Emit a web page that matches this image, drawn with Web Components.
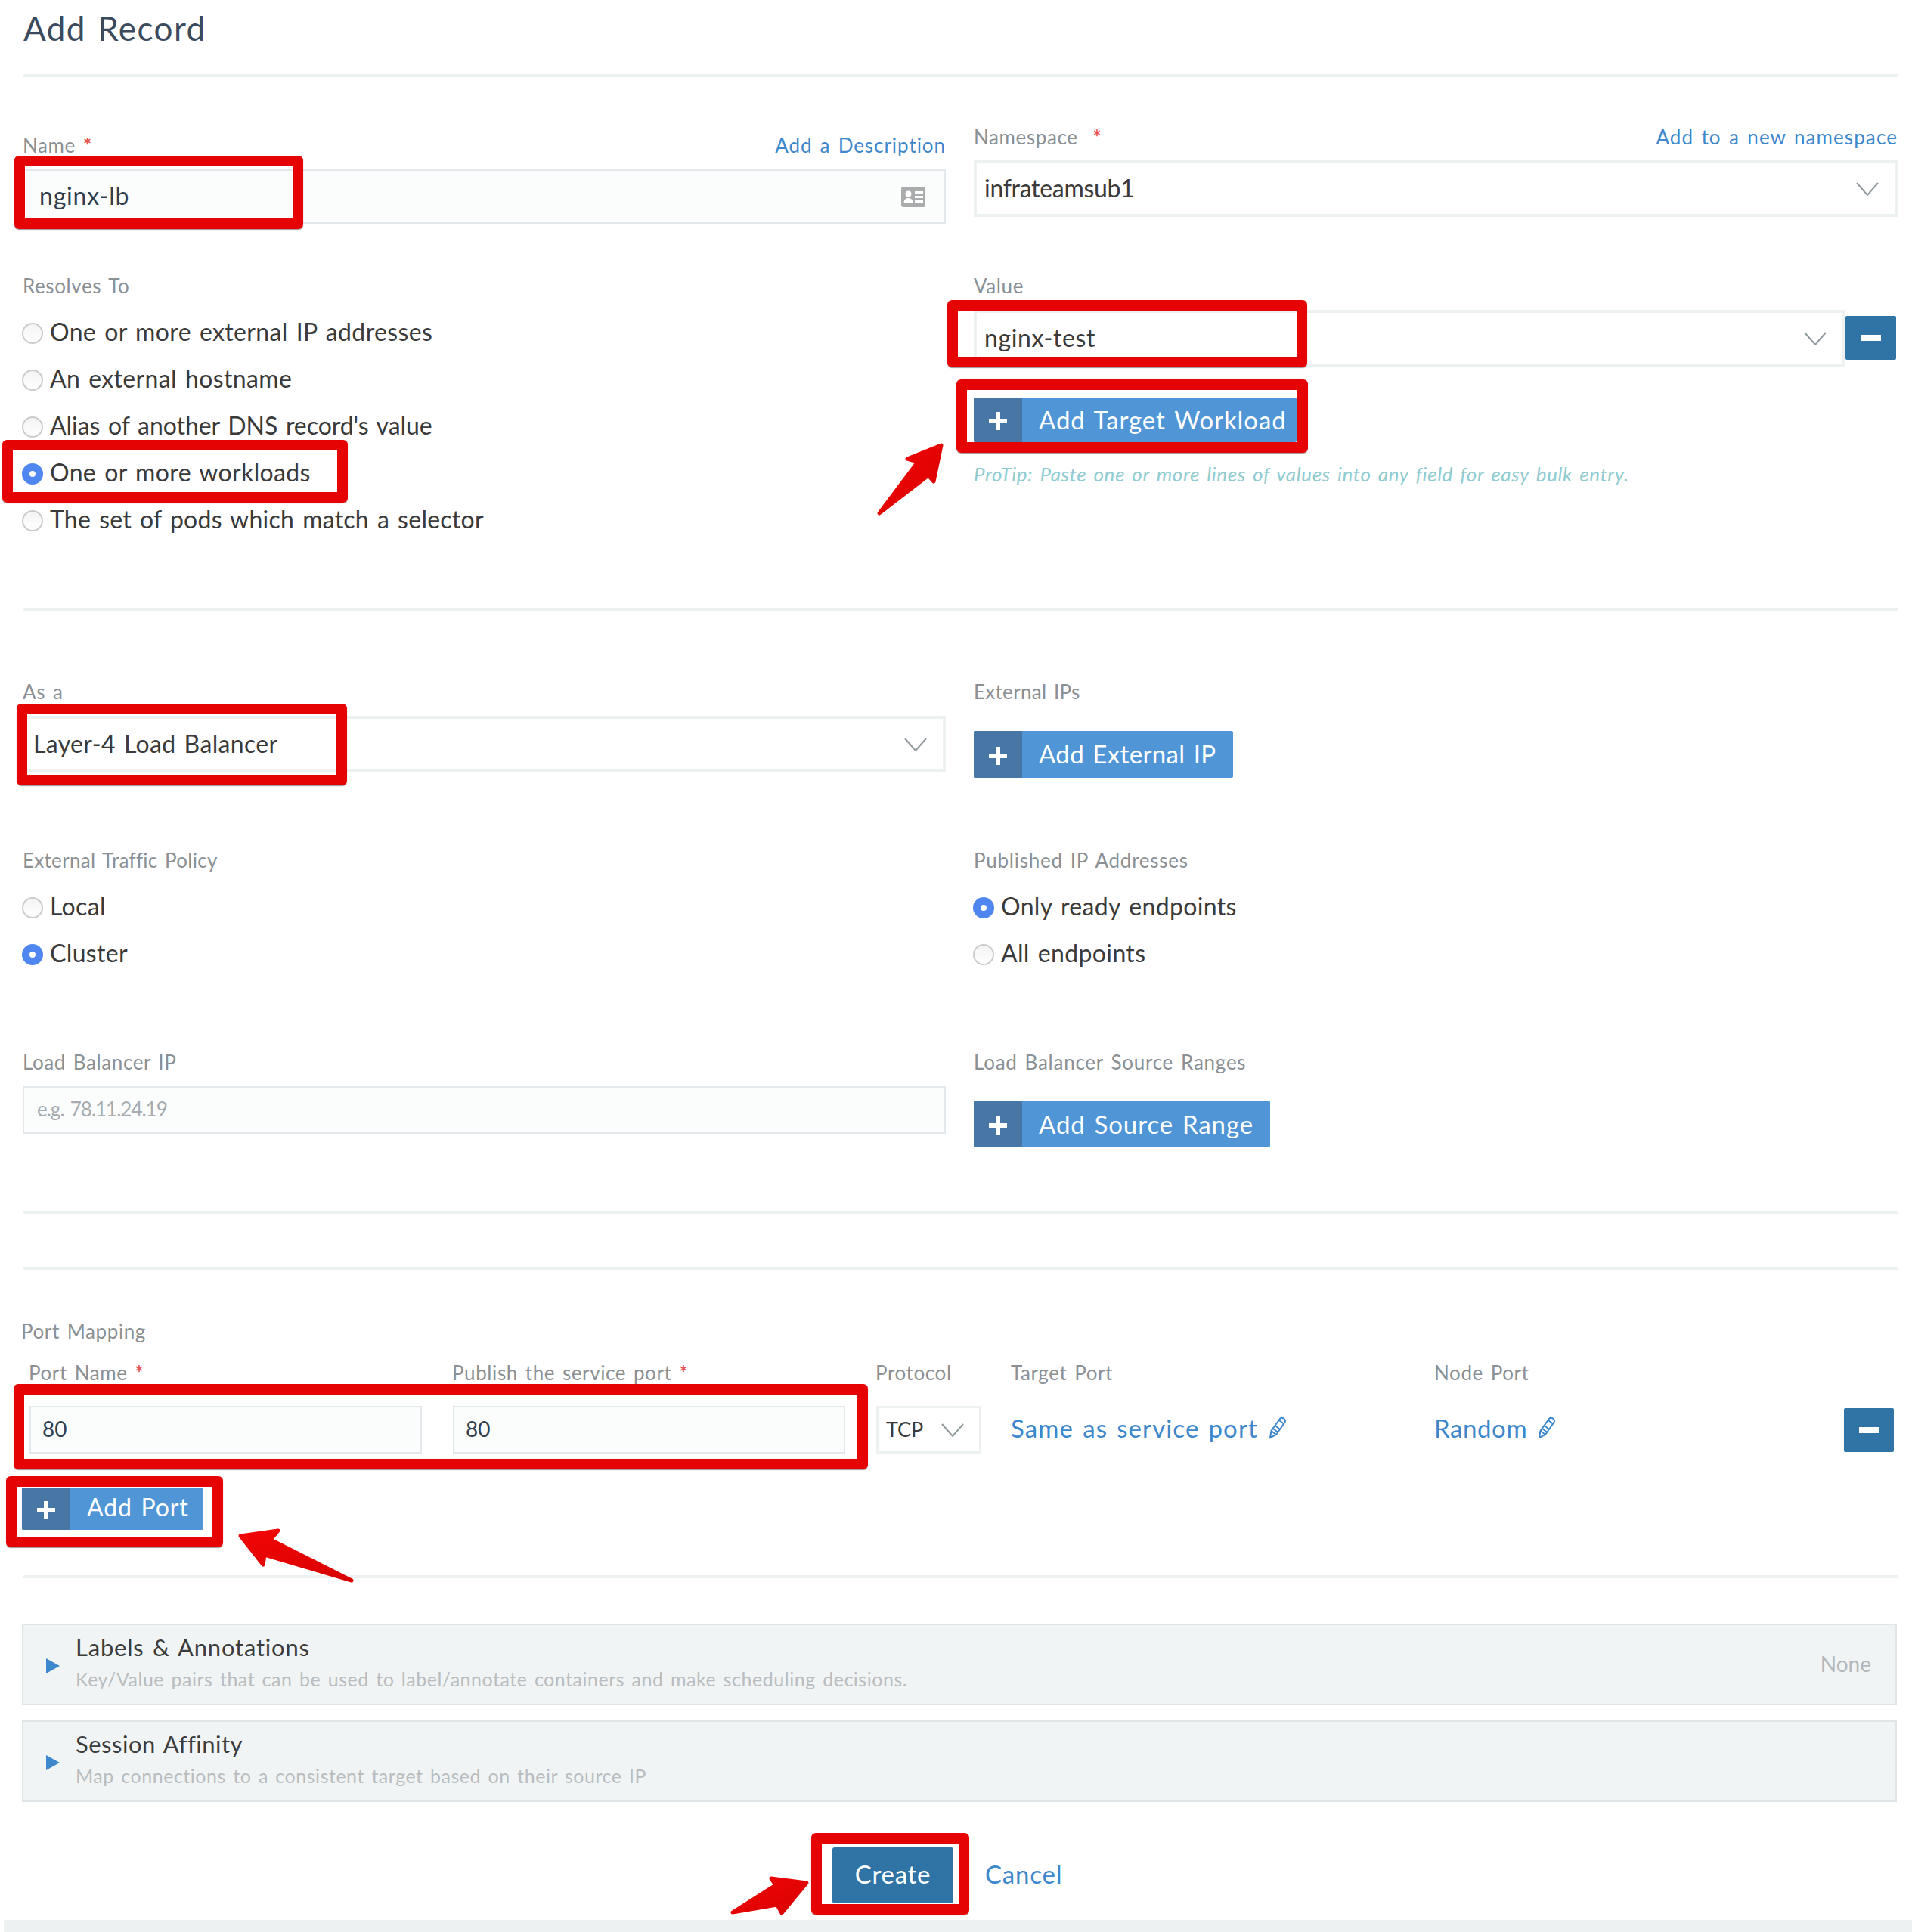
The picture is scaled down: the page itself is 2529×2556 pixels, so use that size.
<!DOCTYPE html>
<html>
<head>
<meta charset="utf-8">
<title>Add Record</title>
<style>
  html, body { margin: 0; background: #fff; }
  body { position: relative; width: 2529px; height: 2556px; overflow: hidden;
         font-family: Lato, "Open Sans", sans-serif; word-spacing: .16em; }
</style>
</head>
<body>
<record-form></record-form>

<anno-box style="left:19px;top:206px;width:382px;height:97px"></anno-box>
<anno-box style="left:3px;top:582px;width:457px;height:83px"></anno-box>
<anno-box style="left:1253px;top:397px;width:476px;height:89px"></anno-box>
<anno-box style="left:1265px;top:502px;width:465px;height:97px"></anno-box>
<anno-box style="left:22px;top:931px;width:437px;height:108px"></anno-box>
<anno-box style="left:18px;top:1831px;width:1130px;height:113px"></anno-box>
<anno-box style="left:8px;top:1953px;width:287px;height:94px"></anno-box>
<anno-box style="left:1073px;top:2425px;width:209px;height:108px"></anno-box>

<anno-arrow id="a1" points="1163,679 1214,611 1200,607 1245,589 1235,637 1228,629"></anno-arrow>
<anno-arrow id="a2" points="465,2091 358,2037 368,2025 318,2032 348,2070 350,2057"></anno-arrow>
<anno-arrow id="a3" points="969,2530 1026,2494 1020,2485 1067,2491 1034,2531 1028,2520"></anno-arrow>

<script>
function shadow(el, html) {
  el.attachShadow({ mode: 'open' }).innerHTML = html;
}

const CHEVRON = `<svg width="30" height="18" viewBox="0 0 30 18"><path d="M1 1 L15 17 L29 1" fill="none" stroke="#8f989c" stroke-width="2"/></svg>`;
const PENCIL = `<svg width="24" height="30" viewBox="0 0 24 30" fill="none" stroke="#3d87cc" stroke-width="2"><path d="M2 28 L3.5 19 L15 3 Q17 1 20 2.5 Q23 5 21.5 7.5 L10 24 Z"/><path d="M3.5 19 L10 24 M6 16 L12.5 21 M9 12 L15 17 M14 5 L20.5 10"/></svg>`;

class FieldLabel extends HTMLElement {
  constructor() {
    super();
    const star = this.hasAttribute('required') ? `<span class="star">*</span>` : '';
    shadow(this, `
      <style>
        :host { display: flex; justify-content: space-between; height: 36px; line-height: 36px;
                font-size: 26px; color: #8a9094; letter-spacing: .6px; white-space: nowrap; }
        .star { color: #e8524f; margin-left: var(--star-gap, 10px); font-weight: 700; }
        ::slotted(a) { color: #3d87cc; letter-spacing: var(--link-spacing, 1.1px); }
      </style>
      <span><slot></slot>${star}</span>
      <slot name="link"></slot>`);
  }
}

class TextInput extends HTMLElement {
  constructor() {
    super();
    shadow(this, `
      <style>
        :host { display: flex; align-items: center; box-sizing: border-box; padding: 0 25px 0 20px;
                background: #fbfdfc; border: 2px solid #e2e8eb; color: #2f3d4f; font-size: 32px; }
        :host([placeholder]) { color: #a6abaf; font-size: 26px; padding-left: 17px; letter-spacing: -1px; }
        slot[name=icon] { margin-left: auto; }
        span { flex: 1; padding-bottom: 3px; }
      </style>
      <span><slot></slot></span><slot name="icon"></slot>`);
  }
}

class SelectBox extends HTMLElement {
  constructor() {
    super();
    shadow(this, `
      <style>
        :host { display: flex; align-items: center; justify-content: space-between; box-sizing: border-box;
                padding: 0 21px 0 10px; background: #fff; border: 4px solid #eef1f2;
                color: #3a3a3a; font-size: 32px; letter-spacing: .3px; }
        span { padding-bottom: 3px; }
        svg { flex: none; }
      </style>
      <span><slot></slot></span>${CHEVRON}`);
  }
}

class RadioRow extends HTMLElement {
  constructor() {
    super();
    shadow(this, `
      <style>
        :host { display: flex; align-items: center; height: 62px; font-size: 32px; color: #3a3a3a;
                letter-spacing: .35px; white-space: nowrap; margin-left: -1px; }
        .dot { width: 28px; height: 28px; box-sizing: border-box; border-radius: 50%; margin-right: 9px; flex: none;
               border: 2px solid #c9cccd; background: linear-gradient(#f4f4f4, #fff);
               display: flex; align-items: center; justify-content: center; margin-top: 2px; }
        :host([checked]) .dot { background: #4f86ef; border-color: #4f86ef; }
        :host([checked]) .dot::after { content: ""; width: 8px; height: 8px; border-radius: 50%; background: #fff; }
        .text { padding-bottom: 3px; }
      </style>
      <span class="dot"></span><span class="text"><slot></slot></span>`);
  }
}

class AddButton extends HTMLElement {
  constructor() {
    super();
    shadow(this, `
      <style>
        :host { display: flex; align-items: stretch; background: #5096d6; color: #fff; font-size: 33px;
                letter-spacing: .9px; white-space: nowrap; border-radius: 2px; overflow: hidden; }
        .plus { width: var(--plus-width, 64px); flex: none; background: #4977a5; display: flex; align-items: center; justify-content: center; }
        svg { margin-top: 3px; }
        .text { padding: 0 0 var(--text-lift, 1px) 22px; display: flex; align-items: center; }
      </style>
      <span class="plus"><svg width="24" height="24" viewBox="0 0 24 24"><path d="M9 0h6v9h9v6h-9v9H9v-9H0V9h9z" fill="#fff"/></svg></span>
      <span class="text"><slot></slot></span>`);
  }
}

class MinusButton extends HTMLElement {
  constructor() {
    super();
    shadow(this, `
      <style>
        :host { display: flex; align-items: center; justify-content: center; background: #2f74a5; border-radius: 2px; }
        i { display: block; width: 26px; height: 8px; background: #fff; }
      </style>
      <i></i>`);
  }
}

class InfoPanel extends HTMLElement {
  constructor() {
    super();
    shadow(this, `
      <style>
        :host { display: flex; align-items: center; box-sizing: border-box; height: 108px;
                background: #f0f4f5; border: 2px solid #e0e6e8; padding-left: 30px; padding-right: 32px; }
        .arrow { width: 0; height: 0; border-left: 18px solid #3d87cc; border-top: 10px solid transparent;
                 border-bottom: 10px solid transparent; margin-right: 21px; margin-top: 3px; }
        .body { flex: 1; padding-bottom: 7px; }
        .title { font-size: 31px; color: #3c3c3c; line-height: 40px; letter-spacing: var(--title-spacing, .8px); }
        .desc { font-size: 25px; color: #b9bdc0; line-height: 36px; margin-top: 4px; letter-spacing: .52px; }
        .side { font-size: 28px; color: #b5b9bc; padding-bottom: 3px; }
      </style>
      <span class="arrow"></span>
      <div class="body">
        <div class="title"><slot></slot></div>
        <div class="desc"><slot name="desc"></slot></div>
      </div>
      <span class="side"><slot name="side"></slot></span>`);
  }
}

// annotations drawn over the screenshot
class AnnoBox extends HTMLElement {
  constructor() {
    super();
    shadow(this, `
      <style>
        :host { position: absolute; box-sizing: border-box; border: 14px solid #e50303; border-radius: 6px;
                box-shadow: 0 1px 1px rgba(80,80,80,.6); }
      </style>`);
  }
}

class AnnoArrow extends HTMLElement {
  constructor() {
    super();
    const pts = this.getAttribute('points');
    shadow(this, `
      <style>
        :host { position: absolute; left: 0; top: 0; width: 2529px; height: 2556px; pointer-events: none; }
        svg { display: block; }
      </style>
      <svg width="2529" height="2556" viewBox="0 0 2529 2556">
        <defs><linearGradient id="g" x1="0" y1="0" x2="1" y2="1"><stop offset="0" stop-color="#f20505"/><stop offset="1" stop-color="#d80202"/></linearGradient></defs>
        <polygon points="${pts}" fill="url(#g)" stroke="url(#g)" stroke-width="5" stroke-linejoin="round"/>
      </svg>`);
  }
}

class RecordForm extends HTMLElement {
  constructor() {
    super();
    shadow(this, `
      <style>
        :host { display: block; padding: 0 19px 0 30px; color: #3a3a3a; }
        a { color: #3d87cc; text-decoration: none; }
        h1 { margin: 0; height: 98px; line-height: 74px; font-size: 44px; font-weight: 400; color: #3b4a5c;
             padding-left: 1px; letter-spacing: 1.45px; }
        .hr { height: 4px; background: #eef1f2; }
        .cols { display: grid; grid-template-columns: 1221px 1222px; column-gap: 37px; }
        .row1 { height: 258px; }
        .row2 { height: 445px; }
        .row3 { height: 311px; }
        .row4 { height: 267px; }
        .row5 { height: 215px; }
        .row1 .left { padding-top: 72px; --link-spacing: .95px; }
        .row1 .right { padding-top: 61px; --star-gap: 20px; }
        .row3 > div { padding-top: 88px; }
        .row1 text-input, .row3 select-box, .row5 text-input { margin-top: 14px; }
        .row1 select-box { margin-top: 13px; height: 75px; padding-left: 10px; letter-spacing: -.3px; }
        .row1 text-input { height: 72px; letter-spacing: .8px; }
        .radios { margin-top: 13px; }
        .value { display: flex; align-items: center; margin-top: 14px; margin-right: 2px; }
        .value select-box { width: 1153px; height: 76px; padding-left: 10px; letter-spacing: .6px; }
        .value minus-button { width: 67px; height: 58px; margin-bottom: 2px; }
        .tip { margin-top: 23px; height: 38px; line-height: 38px; font-size: 26px; font-style: italic; color: #8fcbd0;
               letter-spacing: .62px; white-space: nowrap; }
        .wide-gap { margin-top: 34px; }
        .port-title { margin: 63px 0 20px -2px; }
        .ports { display: grid; grid-template-columns: 560px 560px 178px 560px 1fr 66px; padding: 0 5px 0 9px; row-gap: 25px; align-items: center; }
        .ports field-label { margin-top: -1px; margin-bottom: 1px; }
        .ports text-input { width: 519px; height: 63px; padding-left: 15px; font-size: 28px; letter-spacing: 0; }
        .ports select-box { width: 139px; height: 63px; padding: 0 20px 0 10px; border-width: 3px; font-size: 27px; letter-spacing: 0; }
        .edit { display: flex; align-items: center; gap: 14px; font-size: 33px; letter-spacing: 1.1px; color: #3d87cc; white-space: nowrap; padding-bottom: 5px; }
        .edit.short { letter-spacing: .6px; }
        .ports minus-button { width: 66px; height: 58px; }
        .panels { display: flex; flex-direction: column; gap: 20px; margin: 60px 1px 60px -1px; }
        .actions { display: flex; align-items: center; height: 74px; padding-left: 1071px; font-size: 33px; }
        .create { width: 160px; height: 74px; box-sizing: border-box; padding-bottom: 5px; display: flex; align-items: center; justify-content: center;
                  background: #2f74a5; color: #fff; border-radius: 3px; margin-right: 42px; letter-spacing: .7px; }
        .cancel { padding-bottom: 5px; letter-spacing: .8px; }
        .footer { height: 16px; background: #edf1f2; margin: 22px -19px 0 -25px; }
      </style>

      <h1>Add Record</h1>
      <div class="hr"></div>

      <div class="cols row1">
        <div class="left">
          <field-label required>Name<a slot="link">Add a Description</a></field-label>
          <text-input>nginx-lb
            <svg slot="icon" width="32" height="27" viewBox="0 0 32 27"><rect width="32" height="27" rx="3" fill="#a9abac"/><circle cx="9.5" cy="9.5" r="4" fill="#fff"/><path d="M3.5 22c0-5 2.5-7 6-7s6 2 6 7z" fill="#fff"/><path d="M18 6h11v3H18zM18 12h11v3H18zM18 18h11v3H18z" fill="#fff"/></svg>
          </text-input>
        </div>
        <div class="right">
          <field-label required>Namespace<a slot="link">Add to a new namespace</a></field-label>
          <select-box>infrateamsub1</select-box>
        </div>
      </div>

      <div class="cols row2">
        <div>
          <field-label>Resolves To</field-label>
          <div class="radios">
            <radio-row>One or more external IP addresses</radio-row>
            <radio-row>An external hostname</radio-row>
            <radio-row style="letter-spacing:-.05px">Alias of another DNS record's value</radio-row>
            <radio-row checked>One or more workloads</radio-row>
            <radio-row style="letter-spacing:.25px">The set of pods which match a selector</radio-row>
          </div>
        </div>
        <div>
          <field-label>Value</field-label>
          <div class="value"><select-box>nginx-test</select-box><minus-button></minus-button></div>
          <add-button style="width:427px;height:59px;margin-top:40px">Add Target Workload</add-button>
          <div class="tip">ProTip: Paste one or more lines of values into any field for easy bulk entry.</div>
        </div>
      </div>

      <div class="hr"></div>

      <div class="cols row3">
        <div>
          <field-label>As a</field-label>
          <select-box style="height:75px;letter-spacing:.35px">Layer-4 Load Balancer</select-box>
        </div>
        <div>
          <field-label style="letter-spacing:.3px">External IPs</field-label>
          <add-button class="wide-gap" style="width:343px;height:62px;letter-spacing:.35px;--text-lift:3px">Add External IP</add-button>
        </div>
      </div>

      <div class="cols row4">
        <div>
          <field-label style="letter-spacing:.3px">External Traffic Policy</field-label>
          <div class="radios">
            <radio-row>Local</radio-row>
            <radio-row checked>Cluster</radio-row>
          </div>
        </div>
        <div>
          <field-label style="letter-spacing:.75px">Published IP Addresses</field-label>
          <div class="radios">
            <radio-row checked>Only ready endpoints</radio-row>
            <radio-row>All endpoints</radio-row>
          </div>
        </div>
      </div>

      <div class="cols row5">
        <div>
          <field-label>Load Balancer IP</field-label>
          <text-input placeholder style="height:63px">e.g. 78.11.24.19</text-input>
        </div>
        <div>
          <field-label style="letter-spacing:.75px">Load Balancer Source Ranges</field-label>
          <add-button style="width:392px;height:62px;margin-top:33px">Add Source Range</add-button>
        </div>
      </div>

      <div class="hr"></div>
      <div class="hr" style="margin-top:70px"></div>

      <field-label class="port-title">Port Mapping</field-label>
      <div class="ports">
        <field-label required style="margin-left:-1px">Port Name</field-label>
        <field-label required style="margin-left:-1px">Publish the service port</field-label>
        <field-label style="margin-left:-1px">Protocol</field-label>
        <field-label>Target Port</field-label>
        <field-label>Node Port</field-label>
        <span></span>
        <text-input>80</text-input>
        <text-input>80</text-input>
        <select-box>TCP</select-box>
        <div class="edit">Same as service port ${PENCIL}</div>
        <div class="edit short">Random ${PENCIL}</div>
        <minus-button></minus-button>
      </div>

      <add-button style="width:240px;height:56px;margin-top:45px;margin-left:-1px;font-size:32px;--text-lift:5px">Add Port</add-button>
      <div class="hr" style="margin-top:60px"></div>

      <div class="panels">
        <info-panel>Labels &amp; Annotations<span slot="desc">Key/Value pairs that can be used to label/annotate containers and make scheduling decisions.</span><span slot="side">None</span></info-panel>
        <info-panel style="--title-spacing:.5px">Session Affinity<span slot="desc">Map connections to a consistent target based on their source IP</span></info-panel>
      </div>

      <div class="actions"><span class="create">Create</span><a class="cancel">Cancel</a></div>
      <div class="footer"></div>`);
  }
}

customElements.define('field-label', FieldLabel);
customElements.define('text-input', TextInput);
customElements.define('select-box', SelectBox);
customElements.define('radio-row', RadioRow);
customElements.define('add-button', AddButton);
customElements.define('minus-button', MinusButton);
customElements.define('info-panel', InfoPanel);
customElements.define('anno-box', AnnoBox);
customElements.define('anno-arrow', AnnoArrow);
customElements.define('record-form', RecordForm);
</script>
</body>
</html>
